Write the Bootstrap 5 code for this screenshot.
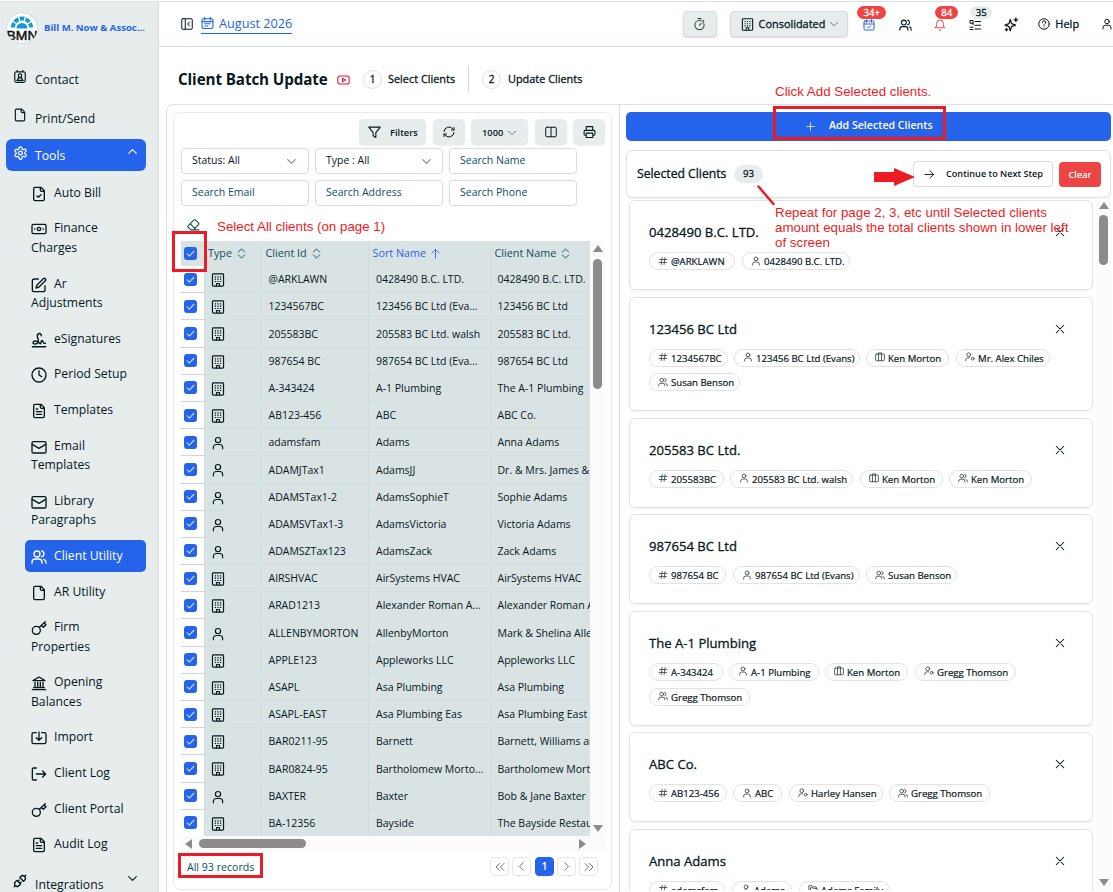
<!DOCTYPE html>
<html lang="en">
<head>
<meta charset="utf-8">
<meta name="viewport" content="width=device-width, initial-scale=1">
<title>Client Batch Update</title>
<link href="https://cdn.jsdelivr.net/npm/bootstrap@5.3.0/dist/css/bootstrap.min.css" rel="stylesheet">
<style>
:root{--ink:#06171d;--teal:#0b4f5c;--blue:#2563eb;--soft:#e7eded;--line:#d3dfdf;--sel:#dae3e3;--note:#ed1c24}
body{width:1113px;height:892px;overflow:hidden;font-family:"Open Sans","Noto Sans",sans-serif;font-size:10.5px;color:var(--ink);background:#fff;position:relative}
.ic{width:14px;height:14px;fill:none;stroke:currentColor;stroke-width:2;stroke-linecap:round;stroke-linejoin:round;flex:none;display:block}
.med{-webkit-text-stroke:.3px currentColor}
.shell{height:892px;border-top:1px solid #fff;}
.shell-in{border-top:1px solid #dbe1e1;height:891px}
/* sidebar */
.side{width:159px;background:var(--soft);border-right:1px solid #d5dcdc;flex:none;font-size:12.2px;overflow:hidden}
.brand-row{height:52px;padding-left:6px;gap:6px}
.logo{width:32px;height:32px;flex:none}
.brand-name{font-size:9.55px;font-weight:700;color:var(--blue);white-space:nowrap}
.top-item{height:32px;margin-left:6px;width:140px;padding:0 7px;border-radius:6px;line-height:20px}
.top-item .lbl{margin-left:6px}
.sub-item{display:block;margin:0 0 4px 25px;width:121px;padding:6px;line-height:19.6px;border-radius:5px;color:inherit;text-decoration:none}
.sub-item .ic{display:inline-block;width:16px;height:16px;margin:0 7px 0 0;vertical-align:-5px}
.on{background:var(--blue);color:#fff}
/* header */
.bar{height:45px;border-bottom:1px solid #d5dcdc;font-size:11.6px}
.month{color:var(--blue);border-bottom:1px solid var(--blue);font-size:12.7px;height:20px;line-height:19px;width:91px}
.soft-btn{background:var(--soft);border:1px solid #d3dcdc;border-radius:4px;height:26px;box-shadow:0 1px 2px #0002}
.pill{font-size:9.6px;line-height:13px;height:13px;border-radius:7px;text-align:center;position:absolute;color:#fff;background:#ef4444}
.hic{position:relative;width:12px}
/* steps */
.title-row{height:57px;padding:7px 0 0 19px}
.page-title{font-size:15.2px;font-weight:700;width:150px;white-space:nowrap;letter-spacing:-.1px}
.step-no{width:19px;height:19px;border:1px solid #dcdfe4;border-radius:50%;font-size:10px}
.step-tx{font-size:10.9px;white-space:nowrap}
/* left panel */
.outer{margin-left:7px;height:800px;border:1px solid #dde1e5;border-right:0;border-bottom:0;border-top-left-radius:7px}
.left{width:453px;border-right:1px solid #d3dfdf;padding:7px 0 0 6px;flex:none}
.grid-box{width:439px;height:778px;border:1px solid #e7ebeb;border-radius:7px;padding:6px 5px 0 7px}
.tool{background:var(--soft);height:26px;border-radius:5px;box-shadow:0 1px 2px #0001;font-weight:600;font-size:9.3px}
.fields{display:grid;grid-template-columns:repeat(3,128px);gap:6px;margin-top:3px}
.fld{height:26px;border:1px solid var(--line);border-radius:4px;padding:0 9px 0 10px;color:var(--teal);font-size:10.5px}
.tbl{width:409px;height:595px;overflow:hidden;background:#fff;position:relative}
.trow{height:27.2px}
.trow>div{flex:none;white-space:nowrap;display:flex;align-items:center;height:100%;overflow:hidden;border-right:1px solid #cfdddd;border-bottom:1px solid #d4dfdf;background:var(--sel);padding:2px 0 0 7px;font-size:10.5px}
.trow>.c0{width:24px;padding:0 0 0 3px;background:#fff;border-bottom-color:#ccd8d8}
.trow>.c1{padding-left:6px}
.trow>.c1 .ic{width:14px;height:14px}
.trow>.c2{padding-left:6.5px}
.trow>.c4{padding-left:6.5px}
.c1{width:57px}.c2{width:107px}.c3{width:122px}.c4{width:107px}
.thead-r{height:25px;background:var(--sel);color:var(--teal)}
.thead-r>div{flex:none;display:flex;align-items:center;height:100%;padding-left:3.5px;border-right:1px solid #cfdddd;white-space:nowrap;font-size:10.8px}
.thead-r>.c0{width:24px;padding-left:3px}
.thead-r>.c1{padding-left:3px}
.cb{width:13px;height:13px;border-radius:3px;background:var(--blue);display:flex;align-items:center;justify-content:center;flex:none}
.cb svg.ic{width:9px!important;height:9px!important;stroke:#c5d6fb;stroke-width:3}
.vbar{width:15px;background:#fbfbfb;display:flex;flex-direction:column;align-items:center}
.thumb{background:#8b8b8b;border-radius:5px}
.up,.down{width:0;height:0;border:5px solid transparent}
.up{border-top:0;border-bottom:7px solid #8b8b8b}
.down{border-bottom:0;border-top:7px solid #8b8b8b}
.lf,.rt{width:0;height:0;border:5px solid transparent}
.lf{border-left:0;border-right:7px solid #8b8b8b}
.rt{border-right:0;border-left:7px solid #8b8b8b}
.pg{width:19px;height:19px;border:1px solid #e2e7e7;border-radius:4px;color:#6b7780;display:flex;align-items:center;justify-content:center}
.pg.on{color:#fff;border-color:var(--blue)}
/* right panel */
.right{padding:7px 0 0 6px;flex:1}
.add-btn{width:485px;height:29px;background:var(--blue);color:#fff;border-radius:5px;border:0;font-weight:600;font-size:10.6px;padding:0 0 1px}
.sel-card{width:485px;height:48px;margin-top:9px;border:1px solid #dfe2e6;border-radius:6px;padding:0 9px 0 10px;box-shadow:0 1px 1px #0001}
.stack{width:470px;padding:2px 0 0 3px;height:692px;overflow:hidden}
.client{width:464px;border:1px solid #dfe2e6;border-radius:6px;margin-bottom:6.55px;height:90px;padding:19px 27px 0 19px;box-shadow:0 1px 2px #0001}
.client.tall{height:114.75px}
.client-name{font-size:13.1px;line-height:24px;height:24px;white-space:nowrap}
.chips{margin-top:8px;row-gap:6.6px}
.chip{height:18px;border:1px solid #dfe2e6;border-radius:9px;font-size:9.6px;line-height:17px;padding:1px 0 0 8px;white-space:nowrap;flex:none;gap:3px;-webkit-text-stroke:.2px currentColor}
.chip .ic{width:10px;height:10px;color:#33444b;margin-top:-2px}
/* notes drawn over the page */
.note{position:absolute;color:var(--note);font-family:"Liberation Sans",Arial,sans-serif;font-size:13.33px;line-height:15px;white-space:nowrap}
.ring{position:absolute;border:3px solid var(--note)}
</style>
</head>
<body>
<svg class="d-none">
<symbol id="contact" viewBox="0 0 24 24"><path d="M6 4h12a3 3 0 0 1 3 3v12a3 3 0 0 1-3 3H6a3 3 0 0 1-3-3V7a3 3 0 0 1 3-3zM7 1.500V4M17 1.500V4M6.500 18.500h11M8 18a4 4 0 0 1 8 0"/><circle cx="12" cy="10.500" r="3"/></symbol>
<symbol id="file" viewBox="0 0 24 24"><path d="M15 2H6a2 2 0 0 0-2 2v16a2 2 0 0 0 2 2h12a2 2 0 0 0 2-2V7zM14 2v4a2 2 0 0 0 2 2h4"/></symbol>
<symbol id="filetext" viewBox="0 0 24 24"><path d="M15 2H6a2 2 0 0 0-2 2v16a2 2 0 0 0 2 2h12a2 2 0 0 0 2-2V7zM14 2v4a2 2 0 0 0 2 2h4M8 9h2M8 13h8M8 17h8"/></symbol>
<symbol id="filecheck" viewBox="0 0 24 24"><path d="M15 2H6a2 2 0 0 0-2 2v16a2 2 0 0 0 2 2h12a2 2 0 0 0 2-2V7zM14 2v4a2 2 0 0 0 2 2h4M9 15l2 2 4-4"/></symbol>
<symbol id="gear" viewBox="0 0 24 24"><path d="M12.220 2h-.44a2 2 0 0 0-2 2v.18a2 2 0 0 1-1 1.730l-.43.25a2 2 0 0 1-2 0l-.15-.08a2 2 0 0 0-2.730.73l-.22.38a2 2 0 0 0 .73 2.730l.15.1a2 2 0 0 1 1 1.720v.51a2 2 0 0 1-1 1.740l-.15.09a2 2 0 0 0-.73 2.730l.22.38a2 2 0 0 0 2.730.73l.15-.08a2 2 0 0 1 2 0l.43.25a2 2 0 0 1 1 1.730V20a2 2 0 0 0 2 2h.44a2 2 0 0 0 2-2v-.18a2 2 0 0 1 1-1.730l.43-.25a2 2 0 0 1 2 0l.15.08a2 2 0 0 0 2.730-.73l.22-.39a2 2 0 0 0-.73-2.730l-.15-.08a2 2 0 0 1-1-1.740v-.5a2 2 0 0 1 1-1.740l.15-.09a2 2 0 0 0 .73-2.730l-.22-.38a2 2 0 0 0-2.730-.73l-.15.08a2 2 0 0 1-2 0l-.43-.25a2 2 0 0 1-1-1.730V4a2 2 0 0 0-2-2z"/><circle cx="12" cy="12" r="3"/></symbol>
<symbol id="cash" viewBox="0 0 24 24"><rect x="1.500" y="5" width="21" height="14" rx="2"/><circle cx="12" cy="12" r="2.500"/><path d="M5.500 12h.5M18 12h.5"/></symbol>
<symbol id="edit" viewBox="0 0 24 24"><path d="M11 3H5a3 3 0 0 0-3 3v13a3 3 0 0 0 3 3h13a3 3 0 0 0 3-3v-6M18.500 2.500a2.100 2.100 0 0 1 3 3L12 15l-4.500 1.500L9 12z"/></symbol>
<symbol id="sign" viewBox="0 0 24 24"><path d="M2 22h20M15.500 5.500C15.500 1 9.500 1.500 9.500 6c0 4 3 6 1 9.500C8.500 18.500 3 19 3 16s5-3.500 8-.5 4 2.500 4 0 2.500-3.500 3-1 1 3 3.500 2.500" stroke-width="2.200"/></symbol>
<symbol id="clock" viewBox="0 0 24 24"><circle cx="12" cy="12" r="10.500"/><path d="M12 5.500V12l4 2.500"/></symbol>
<symbol id="mail" viewBox="0 0 24 24"><rect x="1.500" y="4" width="21" height="17" rx="2"/><path d="M2 8l10 6 10-6"/></symbol>
<symbol id="users" viewBox="0 0 24 24"><path d="M16.500 21.500V20a5 5 0 0 0-5-5h-5a5 5 0 0 0-5 5v1.500M22.500 21.500V20a5 5 0 0 0-3.500-4.600M16 3a4.400 4.400 0 0 1 0 8.600"/><circle cx="9" cy="7.500" r="4.500"/></symbol>
<symbol id="user" viewBox="0 0 24 24"><circle cx="12" cy="7" r="4.500"/><path d="M4 22v-2.500a5 5 0 0 1 5-5h6a5 5 0 0 1 5 5V22"/></symbol>
<symbol id="userdot" viewBox="0 0 24 24"><circle cx="9" cy="6.500" r="4.500"/><circle cx="18.500" cy="16" r="3.300"/><path d="M2 21v-2.500a5 5 0 0 1 5-4.500h4"/></symbol>
<symbol id="key" viewBox="0 0 24 24"><circle cx="8" cy="15.500" r="6"/><path d="M12.500 11L21.500 2.500M15.500 8l3 3 4-4-3-3"/></symbol>
<symbol id="bank" viewBox="0 0 24 24"><path d="M2 22h20M4 19h16M6 18v-7M10 18v-7M14 18v-7M18 18v-7M3 8.500L12 3l9 5.500z"/></symbol>
<symbol id="import" viewBox="0 0 24 24"><path d="M8 4H4a2.500 2.500 0 0 0-2.500 2.500V18A2.500 2.500 0 0 0 4 20.500h16a2.500 2.500 0 0 0 2.500-2.500V6.500A2.500 2.500 0 0 0 20 4h-4M12 3v12M8 11.500l4 4 4-4"/></symbol>
<symbol id="logout" viewBox="0 0 24 24"><path d="M8 3H4a2 2 0 0 0-2 2v14a2 2 0 0 0 2 2h4M8 12h14M17.500 7.500L22 12l-4.500 4.500"/></symbol>
<symbol id="plug" viewBox="0 0 24 24"><g transform="rotate(-45 12 12)" stroke-width="2.300"><path d="M-2 12h3M9 7.500H5.500a4.500 4.500 0 0 0 0 9H9zM9 9.500h3M9 14.500h3M16 7.500h2.500a4.500 4.500 0 0 1 0 9H16zM23 12h3"/></g></symbol>
<symbol id="down" viewBox="0 0 24 24"><path d="M5 8.500l7 7 7-7"/></symbol>
<symbol id="upc" viewBox="0 0 24 24"><path d="M5 15.500l7-7 7 7"/></symbol>
<symbol id="panel" viewBox="0 0 24 24"><rect x="1.500" y="1.500" width="21" height="21" rx="2"/><path d="M8.500 2v20M17 8l-4 4 4 4"/></symbol>
<symbol id="cal" viewBox="0 0 24 24"><rect x="2" y="4" width="20" height="18" rx="2.500"/><path d="M7 1.500v5M17 1.500v5M2 9.500h20M7 13.500h10M7 17.500h6"/></symbol>
<symbol id="calcheck" viewBox="0 0 24 24"><rect x="2" y="4" width="20" height="18" rx="2"/><path d="M7 1.500v5M17 1.500v5M2 10h20M9 16l2 2 4-4"/></symbol>
<symbol id="timer" viewBox="0 0 24 24"><path d="M9 2h6M18.500 6.500L20 5"/><circle cx="12" cy="14" r="8.500"/><path d="M12 14l3-3"/></symbol>
<symbol id="bldg" viewBox="0 0 24 24"><rect x="2.500" y="1.500" width="19" height="21" rx="1.500"/><path d="M9.500 22v-4h5v4"/><path stroke-width="2" stroke-linecap="butt" d="M6.500 6.500h2.200M10.900 6.500h2.200M15.300 6.500h2.200M6.500 10.500h2.200M10.900 10.500h2.200M15.300 10.500h2.200M6.500 14.500h2.200M10.900 14.500h2.200M15.300 14.500h2.200"/></symbol>
<symbol id="bell" viewBox="0 0 24 24"><path d="M10 22h4M2.500 17.500h19c-2.500-2-3-4.500-3-9a6.500 6.500 0 0 0-13 0c0 4.500-.5 7-3 9z"/></symbol>
<symbol id="list" viewBox="0 0 24 24"><path d="M12 5h11M12 12.500h11M12 20h11M2 16.500h6M2 21h6M8 11.500V3H2v5.500h6"/></symbol>
<symbol id="spark" viewBox="0 0 24 24"><path d="M10 4l2 6.500 6.500 2.500-6.500 2.500L10 22l-2-6.500L1.500 13 8 10.500zM19 1.500v6M16 4.500h6M4 18v4M2 20h4"/></symbol>
<symbol id="help" viewBox="0 0 24 24"><circle cx="12" cy="12" r="10.500"/><path d="M8.800 9a3.300 3.300 0 1 1 4.700 3c-1.200.6-1.500 1.200-1.500 2.200M12 17.800v.2"/></symbol>
<symbol id="tube" viewBox="0 0 24 18"><rect x="1.500" y="1.500" width="21" height="15" rx="4"/><path d="M10 5.500v7l5.500-3.500z"/></symbol>
<symbol id="funnel" viewBox="0 0 24 24"><path d="M1.500 3h21l-8 10v9l-5-3v-6z"/></symbol>
<symbol id="refresh" viewBox="0 0 24 24"><path d="M2 11a10 10 0 0 1 17-6l3 3M22 3v5h-5M22 13a10 10 0 0 1-17 6l-3-3M2 21v-5h5"/></symbol>
<symbol id="cols" viewBox="0 0 24 24"><rect x="1.500" y="2.500" width="21" height="19" rx="2"/><path d="M12 3v18"/></symbol>
<symbol id="printer" viewBox="0 0 24 24"><path d="M6 9V2h12v7M6 18H4a2 2 0 0 1-2-2v-5a2 2 0 0 1 2-2h16a2 2 0 0 1 2 2v5a2 2 0 0 1-2 2h-2M6 14h12v8H6z"/></symbol>
<symbol id="eraser" viewBox="0 0 24 24"><path d="M7 21l-5-5a2 2 0 0 1 0-2.500L13 2.500a2 2 0 0 1 2.500 0l6 6a2 2 0 0 1 0 2.500L12 21M22 21H7M6 9.500l9 9"/></symbol>
<symbol id="sort" viewBox="0 0 24 24"><path d="M5 9l7-7 7 7M5 15l7 7 7-7"/></symbol>
<symbol id="arrup" viewBox="0 0 24 24"><path d="M12 22V3M4 11l8-8 8 8"/></symbol>
<symbol id="arrright" viewBox="0 0 24 24"><path d="M2 12h19M13 4l8 8-8 8"/></symbol>
<symbol id="plus" viewBox="0 0 24 24"><path d="M12 1.500v21M1.500 12h21"/></symbol>
<symbol id="tick" viewBox="0 0 24 24"><path d="M3 13l6 6L21 6"/></symbol>
<symbol id="close" viewBox="0 0 24 24"><path d="M3 3l18 18M21 3L3 21"/></symbol>
<symbol id="hash" viewBox="0 0 24 24"><path d="M3.500 8.500h18M2.500 15.500h18M10 3.500L7.500 20.500M17 3.500l-2.500 17"/></symbol>
<symbol id="case" viewBox="0 0 24 24"><rect x="1.500" y="5" width="21" height="16" rx="2"/><path d="M8.500 21V2h7v19"/></symbol>
<symbol id="folder" viewBox="0 0 24 24"><path d="M2 18V4h7l2 3h9v4M2 18h3M7 21h15V11h-8l-2-2H7z"/></symbol>
<symbol id="dl" viewBox="0 0 24 24"><path d="M11 5l-7 7 7 7M20 5l-7 7 7 7"/></symbol>
<symbol id="dr" viewBox="0 0 24 24"><path d="M4 5l7 7-7 7M13 5l7 7-7 7"/></symbol>
<symbol id="sl" viewBox="0 0 24 24"><path d="M15.500 4l-8 8 8 8"/></symbol>
<symbol id="sr" viewBox="0 0 24 24"><path d="M8.500 4l8 8-8 8"/></symbol>
</svg>

<div class="shell"><div class="shell-in d-flex">
<nav class="side">
  <div class="brand-row d-flex align-items-center">
    <svg class="logo" viewBox="0 0 32 32"><defs><clipPath id="disc"><circle cx="16" cy="16" r="15.500"/></clipPath></defs>
      <circle cx="16" cy="16" r="15.500" fill="#fff" stroke="#cfdbf0"/>
      <g clip-path="url(#disc)"><path d="M10.500 16.500a5.500 5.500 0 0 1 11 0z" fill="#1598d8"/>
      <path d="M7 15.500A9 9 0 0 1 25 15.500" fill="none" stroke="#1598d8" stroke-width="4" stroke-dasharray="4.600 1.300"/>
      <text x="16" y="28" text-anchor="middle" textLength="31" lengthAdjust="spacingAndGlyphs" font-family="Liberation Sans,sans-serif" font-size="12.500" fill="#111" stroke="#111" stroke-width=".5">BMN</text></g></svg>
    <span class="brand-name">Bill M. Now &amp; Assoc...</span>
  </div>
  <div class="top-item d-flex align-items-center" style="margin-top:8px"><svg class="ic mb-1" style="height:15px"><use href="#contact"/></svg><span class="lbl ps-1 ms-1 pt-1">Contact</span></div>
  <div class="top-item d-flex align-items-center" style="margin-top:7px"><svg class="ic mb-1" style="height:16px"><use href="#file"/></svg><span class="lbl ps-1 ms-1 pt-1">Print/Send</span></div>
  <div class="top-item on d-flex align-items-center" style="margin-top:6px"><svg class="ic mb-1" style="height:16px;width:15px;margin-right:-1px"><use href="#gear"/></svg><span class="lbl ps-1 ms-1" style="padding-top:2px">Tools</span><svg class="ic ms-auto mb-2" style="width:13px;height:13px"><use href="#upc"/></svg></div>
  <div id="submenu" style="padding-top:5.800px"></div>
  <div class="top-item d-flex align-items-center" style="margin-top:7px"><svg class="ic mb-1" style="height:16px"><use href="#plug"/></svg><span class="lbl ps-1 ms-1 pt-1">Integrations</span><svg class="ic ms-auto mb-2" style="width:13px;height:13px"><use href="#down"/></svg></div>
</nav>

<main class="flex-grow-1 overflow-hidden">
  <header class="bar d-flex align-items-center">
    <svg class="ic" style="width:12px;margin-left:22px"><use href="#panel"/></svg>
    <div class="month d-flex align-items-center" style="margin-left:8px"><svg class="ic" style="width:13px;margin-right:5px;margin-top:-2px"><use href="#cal"/></svg><span class="text-nowrap">August 2026</span></div>
    <div class="soft-btn d-flex align-items-center justify-content-center" style="width:34px;margin-left:391px"><svg class="ic" style="width:13px;color:#3a474c"><use href="#timer"/></svg></div>
    <div class="soft-btn d-flex align-items-center" style="width:120px;margin-left:13px;padding-left:10px"><svg class="ic" style="width:13px;height:13px"><use href="#bldg"/></svg><span class="med" style="margin-left:5px;width:68px;font-size:10.900px">Consolidated</span><svg class="ic" style="width:12px;height:12px;margin-left:1px;color:#6b7780"><use href="#down"/></svg></div>
    <div class="hic" style="margin-left:15px"><svg class="ic" style="width:12px;color:#2563eb;margin-top:2px"><use href="#calcheck"/></svg><span class="pill med" style="left:-6px;top:-10px;width:29px">34+</span></div>
    <div class="hic" style="margin-left:24px"><svg class="ic" style="width:13px;margin-top:2px"><use href="#users"/></svg></div>
    <div class="hic" style="margin-left:23px"><svg class="ic" style="width:12px;color:#ef4444;margin-top:2px"><use href="#bell"/></svg><span class="pill med" style="left:1px;top:-10px;width:23px">84</span></div>
    <div class="hic" style="margin-left:23px"><svg class="ic" style="width:12px;margin-top:2px"><use href="#list"/></svg><span class="pill med" style="left:1px;top:-10px;width:22px;background:#e7eded;color:#06171d">35</span></div>
    <div class="hic" style="margin-left:23px;width:15px"><svg class="ic" style="width:15px;height:15px;margin-top:1px"><use href="#spark"/></svg></div>
    <svg class="ic" style="width:12px;margin-left:19px"><use href="#help"/></svg><span class="med" style="margin-left:5px;width:26px;font-size:11px">Help</span>
    <svg class="ic" style="width:12px;margin-left:20px"><use href="#user"/></svg>
  </header>

  <div class="title-row d-flex align-items-center">
    <h1 class="page-title mb-0">Client Batch Update</h1>
    <svg class="ic" style="width:13px;height:10px;color:#d81b4a;margin-left:9px;margin-top:2px"><use href="#tube"/></svg>
    <span class="step-no med d-flex align-items-center justify-content-center" style="margin-left:13px">1</span><span class="step-tx med" style="margin-left:6px;width:67px">Select Clients</span>
    <span style="width:1px;height:26px;background:#ccd9d9;margin-left:13px"></span>
    <span class="step-no med d-flex align-items-center justify-content-center" style="margin-left:13px">2</span><span class="step-tx med" style="margin-left:7px">Update Clients</span>
  </div>

  <div class="outer d-flex">
    <section class="left">
      <div class="grid-box">
        <div class="d-flex justify-content-end" style="margin-right:1px">
          <div class="tool d-flex align-items-center" style="width:67px;padding-left:9px"><svg class="ic" style="width:13px"><use href="#funnel"/></svg><span style="margin-left:9px;padding-top:1px">Filters</span></div>
          <div class="tool d-flex align-items-center justify-content-center" style="width:32px;margin-left:7px"><svg class="ic" style="width:12px"><use href="#refresh"/></svg></div>
          <div class="tool d-flex align-items-center" style="width:57px;margin-left:6px;padding:1px 0 0 11px">1000<svg class="ic" style="width:12px;height:12px;margin-left:3px;color:#6b7780"><use href="#down"/></svg></div>
          <div class="tool d-flex align-items-center justify-content-center" style="width:32px;margin-left:7px"><svg class="ic" style="width:12px"><use href="#cols"/></svg></div>
          <div class="tool d-flex align-items-center justify-content-center" style="width:32px;margin-left:6px"><svg class="ic" style="width:13px"><use href="#printer"/></svg></div>
        </div>
        <div class="fields">
          <div class="fld d-flex align-items-center justify-content-between" style="color:#06171d;padding-right:10px">Status: All<svg class="ic" style="width:13px;height:13px;color:#7b878c"><use href="#down"/></svg></div>
          <div class="fld d-flex align-items-center justify-content-between" style="color:#06171d;padding-right:9px">Type : All<svg class="ic" style="width:13px;height:13px;color:#7b878c"><use href="#down"/></svg></div>
          <div class="fld d-flex align-items-center">Search Name</div>
          <div class="fld d-flex align-items-center">Search Email</div>
          <div class="fld d-flex align-items-center">Search Address</div>
          <div class="fld d-flex align-items-center">Search Phone</div>
        </div>
        <div style="height:35px;padding:12px 0 0 6px;color:#0b4f5c"><svg class="ic" style="width:13px;height:14px"><use href="#eraser"/></svg></div>
        <div class="d-flex">
          <div class="tbl">
            <div class="thead-r d-flex">
              <div class="c0"><span class="cb"><svg class="ic"><use href="#tick"/></svg></span></div>
              <div class="c1">Type<svg class="ic" style="width:11px;height:11px;margin-left:4px"><use href="#sort"/></svg></div>
              <div class="c2">Client Id<svg class="ic" style="width:11px;height:11px;margin-left:4px"><use href="#sort"/></svg></div>
              <div class="c3" style="color:#2f62e8">Sort Name<svg class="ic" style="width:11px;height:11px;margin-left:4px"><use href="#arrup"/></svg></div>
              <div class="c4">Client Name<svg class="ic" style="width:11px;height:11px;margin-left:4px"><use href="#sort"/></svg></div>
            </div>
            <div id="rows"></div>
          </div>
          <div class="vbar" style="height:595px;padding-top:4px"><i class="up"></i><i class="thumb" style="width:9px;height:130px;margin-top:7px"></i><i class="down mt-auto" style="margin-bottom:4px"></i></div>
        </div>
        <div class="d-flex align-items-center" style="height:15px;background:#fbfbfb;padding:0 20px 0 4px"><i class="lf"></i><i class="thumb" style="width:107px;height:9px;margin-left:7px"></i><i class="rt ms-auto"></i></div>
        <div class="d-flex align-items-center" style="height:31px;padding:0 8px 0 6px;color:#0b4f5c;font-size:10.600px"><span class="me-auto" style="padding-top:2px">All 93 records</span>
          <span class="pg"><svg class="ic" style="width:12px;height:12px"><use href="#dl"/></svg></span>
          <span class="pg" style="margin-left:3px"><svg class="ic" style="width:11px;height:11px"><use href="#sl"/></svg></span>
          <span class="pg on" style="margin-left:4px;font-weight:600">1</span>
          <span class="pg" style="margin-left:3px"><svg class="ic" style="width:11px;height:11px"><use href="#sr"/></svg></span>
          <span class="pg" style="margin-left:3px"><svg class="ic" style="width:12px;height:12px"><use href="#dr"/></svg></span>
        </div>
      </div>
    </section>

    <section class="right">
      <button class="add-btn d-flex align-items-center"><svg class="ic" style="width:9px;height:9px;margin-left:180px"><use href="#plus"/></svg><span style="margin-left:14px">Add Selected Clients</span></button>
      <div class="sel-card d-flex align-items-center">
        <span class="med" style="font-size:12.200px;width:91px;white-space:nowrap;padding-top:1px">Selected Clients</span>
        <span class="med" style="margin-left:6px;width:29px;height:18px;line-height:17px;border-radius:9px;background:#e7eded;text-align:center;font-size:9.600px">93</span>
        <span class="d-flex align-items-center ms-auto" style="width:140px;height:26px;border:1px solid #d3dfdf;border-radius:4px;padding-left:10px;font-weight:600;font-size:9.150px"><svg class="ic" style="width:11px;height:11px"><use href="#arrright"/></svg><span class="text-nowrap" style="margin-left:11px">Continue to Next Step</span></span>
        <span style="margin-left:6px;width:42px;height:25px;line-height:25px;border-radius:4px;background:#ef4444;color:#fff;text-align:center;font-weight:600;font-size:9.200px">Clear</span>
      </div>
      <div class="d-flex">
        <div class="stack" id="clients"></div>
        <div class="vbar" style="height:694px;padding-top:4px"><i class="up"></i><i class="thumb" style="width:9px;height:50px;margin-top:6px"></i><i class="down mt-auto" style="margin-bottom:6px"></i></div>
      </div>
    </section>
  </div>
</main>
</div></div>

<div class="note" style="left:775px;top:84px">Click Add Selected clients.</div>
<div class="note" style="left:217px;top:219px">Select All clients (on page 1)</div>
<div class="note" style="left:775px;top:205px">Repeat for page 2, 3, etc until Selected clients<br>amount equals the total clients shown in lower left<br>of screen</div>
<div class="ring" style="left:773px;top:106px;width:173px;height:34px"></div>
<div class="ring" style="left:172px;top:231px;width:35px;height:41px"></div>
<div class="ring" style="left:178px;top:853px;width:85px;height:25px"></div>
<svg class="position-absolute" style="left:750px;top:160px" width="170" height="50"><path d="M124 12h20V8l21 9-21 9v-4h-20z" fill="#ed1c24"/><path d="M8.500 26.500l15 17.500" stroke="#ed1c24" stroke-width="2.500" stroke-linecap="round"/></svg>

<script src="https://cdn.jsdelivr.net/npm/bootstrap@5.3.0/dist/js/bootstrap.bundle.min.js"></script>
<script>
const ic = n => `<svg class="ic"><use href="#${n}"/></svg>`;
const menu = [['filecheck','Auto Bill'],['cash','Finance<br>Charges'],['edit','Ar<br>Adjustments'],['sign','eSignatures'],['clock','Period Setup'],['filetext','Templates'],['mail','Email<br>Templates'],['mail','Library<br>Paragraphs'],['users','Client Utility'],['file','AR Utility'],['key','Firm<br>Properties'],['bank','Opening<br>Balances'],['import','Import'],['logout','Client Log'],['key','Client Portal'],['filetext','Audit Log']];
document.getElementById('submenu').innerHTML = menu.map(([i,t]) => `<a class="sub-item ${t==='Client Utility'?'on':''}">${ic(i)}${t}</a>`).join('');
const rows = [
['b','@ARKLAWN','0428490 B.C. LTD.','0428490 B.C. LTD.'],
['b','1234567BC','123456 BC Ltd (Eva...','123456 BC Ltd'],
['b','205583BC','205583 BC Ltd. walsh','205583 BC Ltd.'],
['b','987654 BC','987654 BC Ltd (Eva...','987654 BC Ltd'],
['b','A-343424','A-1 Plumbing','The A-1 Plumbing'],
['b','AB123-456','ABC','ABC Co.'],
['u','adamsfam','Adams','Anna Adams'],
['u','ADAMJTax1','AdamsJJ','Dr. &amp; Mrs. James &amp;'],
['u','ADAMSTax1-2','AdamsSophieT','Sophie Adams'],
['u','ADAMSVTax1-3','AdamsVictoria','Victoria Adams'],
['u','ADAMSZTax123','AdamsZack','Zack Adams'],
['b','AIRSHVAC','AirSystems HVAC','AirSystems HVAC'],
['b','ARAD1213','Alexander Roman A...','Alexander Roman A'],
['u','ALLENBYMORTON','AllenbyMorton','Mark &amp; Shelina Alle'],
['b','APPLE123','Appleworks LLC','Appleworks LLC'],
['b','ASAPL','Asa Plumbing','Asa Plumbing'],
['b','ASAPL-EAST','Asa Plumbing Eas','Asa Plumbing East'],
['b','BAR0211-95','Barnett','Barnett, Williams an'],
['b','BAR0824-95','Bartholomew Morto...','Bartholomew Mort'],
['u','BAXTER','Baxter','Bob &amp; Jane Baxter'],
['b','BA-12356','Bayside','The Bayside Restau']];
document.getElementById('rows').innerHTML = rows.map(([k,a,b,c]) => `<div class="trow d-flex"><div class="c0"><span class="cb">${ic('tick')}</span></div><div class="c1">${ic(k==='b'?'bldg':'user')}</div><div class="c2">${a}</div><div class="c3">${b}</div><div class="c4">${c}</div></div>`).join('');
// each chip: icon, label, width, gap before it
const clients = [
['0428490 B.C. LTD.',[['hash','@ARKLAWN',86,0],['user','0428490 B.C. LTD.',108,7]]],
['123456 BC Ltd',[['hash','1234567BC',79,0],['user','123456 BC Ltd (Evans)',126,6],['case','Ken Morton',83,6],['userdot','Mr. Alex Chiles',94,7],['users','Susan Benson',91,0]]],
['205583 BC Ltd.',[['hash','205583BC',75,0],['user','205583 BC Ltd. walsh',123,6],['case','Ken Morton',83,7],['users','Ken Morton',83,6]]],
['987654 BC Ltd',[['hash','987654 BC',77,0],['user','987654 BC Ltd (Evans)',127,7],['users','Susan Benson',91,6]]],
['The A-1 Plumbing',[['hash','A-343424',74,0],['user','A-1 Plumbing',90,6],['case','Ken Morton',83,6],['userdot','Gregg Thomson',101,7],['users','Gregg Thomson',101,0]]],
['ABC Co.',[['hash','AB123-456',78,0],['user','ABC',49,6],['userdot','Harley Hansen',94,7],['users','Gregg Thomson',101,6]]],
['Anna Adams',[['hash','adamsfam',76,0],['user','Adams',60,7],['folder','Adams Family',91,7]]]];
document.getElementById('clients').innerHTML = clients.map(([n,ch]) => `<div class="client ${ch.length>4?'tall':''}"><div class="client-name med d-flex align-items-center justify-content-between">${n}<svg class="ic" style="width:10px;height:10px;stroke-width:2.500"><use href="#close"/></svg></div><div class="chips d-flex flex-wrap">${ch.map(([i,t,w,g]) => `<span class="chip d-flex align-items-center" style="width:${w}px;margin-left:${g}px">${ic(i)}${t}</span>`).join('')}</div></div>`).join('');
</script>
</body>
</html>
